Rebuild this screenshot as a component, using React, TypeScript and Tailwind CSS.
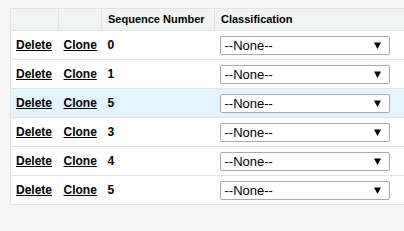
import React from "react";

const rows = [
  { n: "0", hl: false },
  { n: "1", hl: false },
  { n: "5", hl: true },
  { n: "3", hl: false },
  { n: "4", hl: false },
  { n: "5", hl: false },
];

function FakeSelect() {
  return (
    <div className="flex h-[19px] w-[170px] items-center justify-between rounded-[2px] border border-[#a9a9a9] bg-white pl-[4px] pr-[8px] text-[13px] font-normal leading-none text-black">
      <span>--None--</span>
      <svg width="7" height="7" viewBox="0 0 7 7">
        <path d="M0 0.5 L7 0.5 L3.5 7 Z" fill="#000" />
      </svg>
    </div>
  );
}

export default function App() {
  return (
    <div
      className="h-[231px] w-[404px] overflow-hidden bg-[#f6f6f6] pl-[10px] pt-[8px]"
      style={{ fontFamily: '"Liberation Sans", Arial, sans-serif' }}
    >
      <table className="w-[410px] border-collapse border border-[#e0e3e5] bg-white">
        <thead>
          <tr className="h-[22px] bg-[#f2f3f3] text-left text-[11px] font-bold text-black">
            <th className="w-[48px] border-b border-r border-[#e0e3e5] p-0"></th>
            <th className="w-[43px] border-b border-r border-[#e0e3e5] p-0"></th>
            <th className="w-[113px] border-b border-r border-[#e0e3e5] pl-[6px] font-bold">Sequence Number</th>
            <th className="border-b border-[#e0e3e5] pl-[6px] font-bold">Classification</th>
          </tr>
        </thead>
        <tbody>
          {rows.map((r, i) => (
            <tr
              key={i}
              className={`h-[29px] border-b border-[#e3e3e3] text-[12px] font-bold text-black ${r.hl ? "bg-[#e3f3ff]" : "bg-white"}`}
            >
              <td className="pl-[5px]">
                <span className="underline">Delete</span>
              </td>
              <td className="pl-[5px]">
                <span className="underline">Clone</span>
              </td>
              <td className="pl-[6px]">{r.n}</td>
              <td className="pl-[5px]">
                <FakeSelect />
              </td>
            </tr>
          ))}
        </tbody>
      </table>
    </div>
  );
}
